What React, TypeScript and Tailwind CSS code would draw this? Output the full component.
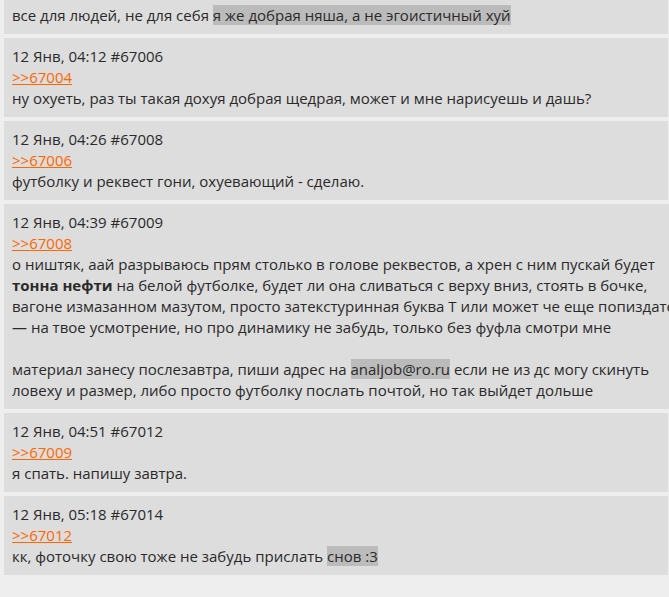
import React from "react";

const Link = ({ n }: { n: string }) => (
  <div>
    <a href="#" className="text-[#ff6600] underline">&gt;&gt;{n}</a>
  </div>
);

const Hl = ({ children }: { children: React.ReactNode }) => (
  <span className="bg-[#bbbbbb]">{children}</span>
);

export default function App() {
  return (
    <div className="w-[669px] h-[597px] overflow-hidden bg-[#eeeeee] text-[#2a2a2a] font-['Open_Sans',sans-serif] text-[15px] leading-[21px]">
      <div className="flex flex-col gap-1 pl-1 whitespace-nowrap">
        <div className="bg-[#dddddd] w-[664px] pl-2 pt-[5px] pb-2">
          все для людей, не для себя <Hl>я же добрая няша, а не эгоистичный хуй</Hl>
        </div>

        <div className="bg-[#dddddd] w-[664px] pl-2 pt-2 pb-2">
          <div>12 Янв, 04:12 #67006</div>
          <Link n="67004" />
          <div>ну охуеть, раз ты такая дохуя добрая щедрая, может и мне нарисуешь и дашь?</div>
        </div>

        <div className="bg-[#dddddd] w-[664px] pl-2 pt-2 pb-2">
          <div>12 Янв, 04:26 #67008</div>
          <Link n="67006" />
          <div>футболку и реквест гони, охуевающий - сделаю.</div>
        </div>

        <div className="bg-[#dddddd] w-[720px] pl-2 pt-2 pb-2">
          <div>12 Янв, 04:39 #67009</div>
          <Link n="67008" />
          <div>
            о ништяк, аай разрываюсь прям столько в голове реквестов, а хрен с ним пускай будет
            <br />
            <b>тонна нефти</b> на белой футболке, будет ли она сливаться с верху вниз, стоять в бочке,
            <br />
            вагоне измазанном мазутом, просто затекстуринная буква Т или может че еще попиздатее
            <br />— на твое усмотрение, но про динамику не забудь, только без фуфла смотри мне
            <br />
            <br />
            материал занесу послезавтра, пиши адрес на <Hl>analjob@ro.ru</Hl> если не из дс могу скинуть
            <br />
            ловеху и размер, либо просто футболку послать почтой, но так выйдет дольше
          </div>
        </div>

        <div className="bg-[#dddddd] w-[664px] pl-2 pt-2 pb-2">
          <div>12 Янв, 04:51 #67012</div>
          <Link n="67009" />
          <div>я спать. напишу завтра.</div>
        </div>

        <div className="bg-[#dddddd] w-[664px] pl-2 pt-2 pb-2">
          <div>12 Янв, 05:18 #67014</div>
          <Link n="67012" />
          <div>
            кк, фоточку свою тоже не забудь прислать <Hl>снов :3</Hl>
          </div>
        </div>
      </div>
    </div>
  );
}
